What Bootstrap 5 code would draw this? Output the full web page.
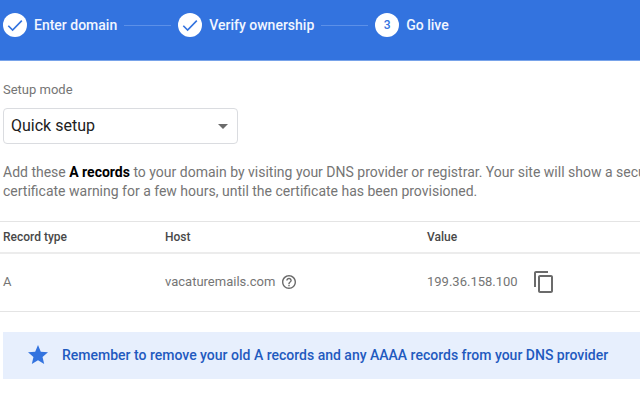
<!DOCTYPE html>
<html lang="en">
<head>
<meta charset="utf-8">
<meta name="viewport" content="width=device-width, initial-scale=1">
<title>Connect domain</title>
<link href="https://cdn.jsdelivr.net/npm/bootstrap@5.3.0/dist/css/bootstrap.min.css" rel="stylesheet">
<style>
  body { font-family: Roboto, sans-serif; font-size: 13px; line-height: 20px; color: #757575; background: #fff; overflow-x: hidden; }
  svg { display: block; flex-shrink: 0; }
  .stepper { background: #3373df; border-bottom: 1px solid #78a3ea; padding: 13px 3px 23px; }
  .step { font-size: 14px; line-height: 24px; font-weight: 500; color: #f1f6ff; gap: 7px; }
  .step-dot { width: 24px; height: 24px; background: #fff; color: #3373df; font-size: 12px; }
  .step-line { width: 47px; height: 1px; background: #5c90e8; margin: 0 7px; }
  .content { padding: 19px 0 0 3px; }
  .setup-label { margin-bottom: 8px; }
  .setup-select { width: 235px; height: 36px; padding: 0 40px 0 7px; font-size: 16px; line-height: 24px; color: #212121; background-image: none; border: 1px solid #dadce0; border-radius: 4px; }
  .caret { right: 10px; }
  .intro { font-size: 14px; line-height: 19px; margin: 19px 0 20px; }
  .intro strong { color: #000; font-weight: 700; }
  .records { --bs-table-bg: transparent; table-layout: fixed; border-top: 1px solid #e4e4e4; margin: 0 0 20px -3px; width: calc(100% + 3px); }
  .records th, .records td { padding: 0 0 0 3px; vertical-align: middle; color: #757575; border-bottom: 1px solid #e4e4e4; }
  .records th { height: 31px; font-size: 12px; font-weight: 500; color: #484848; border-bottom: 2px solid #ececec; }
  .records td { height: 59px; }
  .col-type { width: 162px; }
  .col-host { width: 262px; }
  .cell-line { gap: 7px; }
  .cell-line.wide { gap: 14px; }
  .icon-btn { padding: 0; border: 0; background: none; color: #6b6b6b; }
  .notice { background: #e7effd; color: #1f5abf; font-size: 14px; font-weight: 500; padding: 11px 0 12px 23px; gap: 12px; }
</style>
</head>
<body>
<header class="stepper">
  <ol class="list-unstyled d-flex align-items-center mb-0 text-nowrap">
    <li class="step d-flex align-items-center">
      <span class="step-dot rounded-circle d-flex align-items-center justify-content-center"><svg width="24" height="24" viewBox="0 0 24 24" fill="none" stroke="currentColor" stroke-width="1.6"><path d="M5.300 12.700 9.600 17 18.800 7.600"/></svg></span>
      <span>Enter domain</span>
    </li>
    <li class="step-line" aria-hidden="true"></li>
    <li class="step d-flex align-items-center">
      <span class="step-dot rounded-circle d-flex align-items-center justify-content-center"><svg width="24" height="24" viewBox="0 0 24 24" fill="none" stroke="currentColor" stroke-width="1.6"><path d="M5.300 12.700 9.600 17 18.800 7.600"/></svg></span>
      <span>Verify ownership</span>
    </li>
    <li class="step-line" aria-hidden="true"></li>
    <li class="step d-flex align-items-center" aria-current="step">
      <span class="step-dot rounded-circle d-flex align-items-center justify-content-center">3</span>
      <span>Go live</span>
    </li>
  </ol>
</header>
<main class="content">
  <label class="setup-label d-block" for="mode">Setup mode</label>
  <div class="position-relative d-inline-flex align-items-center">
    <select id="mode" class="setup-select form-select">
      <option>Quick setup</option>
      <option>Advanced setup</option>
    </select>
    <svg class="caret position-absolute pe-none" width="10" height="5" viewBox="0 0 10 5"><path d="M0 0h10L5 5z" fill="#6b6b6b"/></svg>
  </div>
  <p class="intro text-nowrap">Add these <strong>A records</strong> to your domain by visiting your DNS provider or registrar. Your site will show a security<br>certificate warning for a few hours, until the certificate has been provisioned.</p>
  <table class="table records">
    <thead>
      <tr><th class="col-type" scope="col">Record type</th><th class="col-host" scope="col">Host</th><th scope="col">Value</th></tr>
    </thead>
    <tbody>
      <tr>
        <td>A</td>
        <td>
          <div class="cell-line d-flex align-items-center">
            <span>vacaturemails.com</span>
            <button type="button" class="icon-btn" aria-label="About this host"><svg width="14" height="14" viewBox="2 2 20 20" fill="currentColor"><path d="M11 18h2v-2h-2v2zm1-16C6.480 2 2 6.480 2 12s4.480 10 10 10 10-4.480 10-10S17.520 2 12 2zm0 18c-4.410 0-8-3.590-8-8s3.590-8 8-8 8 3.590 8 8-3.590 8-8 8zm0-14c-2.210 0-4 1.790-4 4h2c0-1.100.9-2 2-2s2 .9 2 2c0 2-3 1.750-3 5h2c0-2.250 3-2.500 3-5 0-2.210-1.790-4-4-4z"/></svg></button>
          </div>
        </td>
        <td>
          <div class="cell-line wide d-flex align-items-center">
            <span>199.36.158.100</span>
            <button type="button" class="icon-btn" aria-label="Copy value"><svg width="24" height="24" viewBox="0 0 24 24" fill="currentColor"><path d="M16 1H4c-1.100 0-2 .9-2 2v14h2V3h12V1zm3 4H8c-1.100 0-2 .9-2 2v14c0 1.100.9 2 2 2h11c1.100 0 2-.9 2-2V7c0-1.100-.9-2-2-2zm0 16H8V7h11v14z"/></svg></button>
          </div>
        </td>
      </tr>
    </tbody>
  </table>
  <div class="notice d-flex align-items-center text-nowrap" role="note">
    <svg width="24" height="24" viewBox="0 0 24 24" fill="#3373df"><path d="M12 17.270 18.180 21l-1.640-7.030L22 9.240l-7.190-.61L12 2 9.190 8.630 2 9.240l5.460 4.730L5.820 21z"/></svg>
    <span>Remember to remove your old A records and any AAAA records from your DNS provider</span>
  </div>
</main>
<script src="https://cdn.jsdelivr.net/npm/bootstrap@5.3.0/dist/js/bootstrap.bundle.min.js"></script>
</body>
</html>
